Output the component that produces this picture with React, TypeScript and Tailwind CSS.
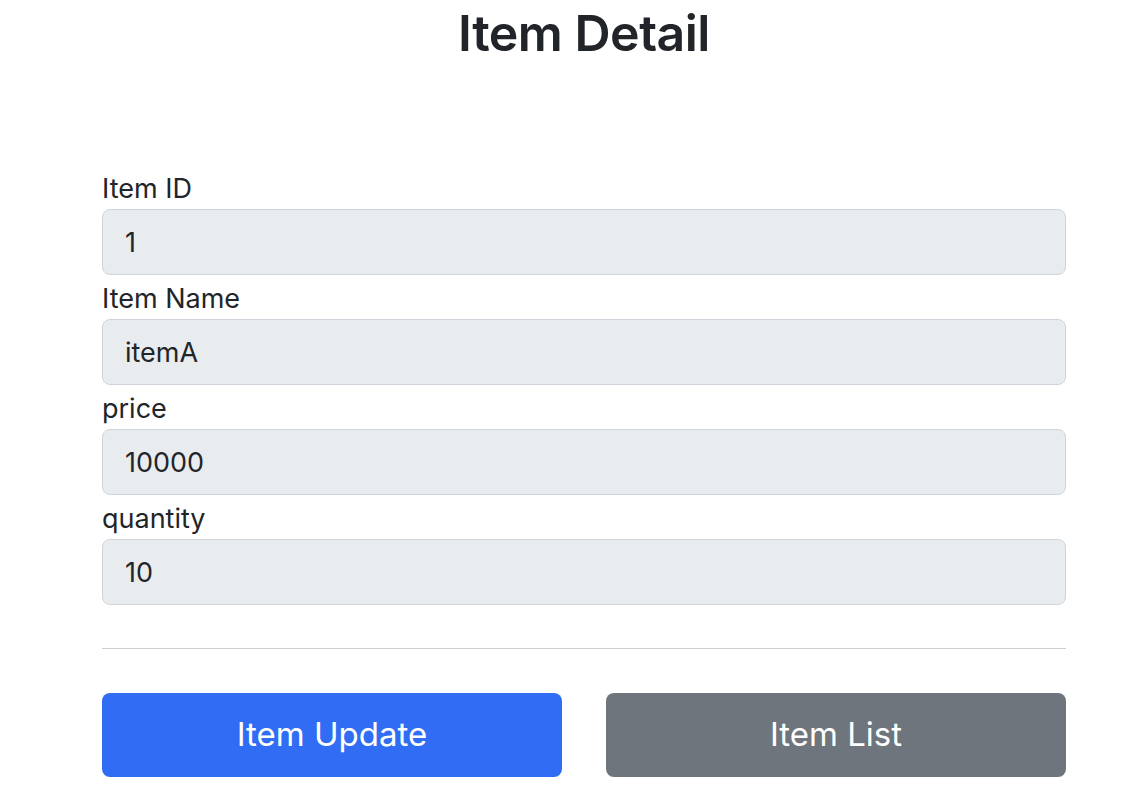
const fields = [
  { label: "Item ID", value: "1" },
  { label: "Item Name", value: "itemA" },
  { label: "price", value: "10000" },
  { label: "quantity", value: "10" },
];

export default function App() {
  return (
    <div className="min-h-screen bg-white font-['Inter','Noto_Sans',sans-serif] text-[#212529]">
      <div className="ml-[102px] w-[964px]">
        {/* Header */}
        <h2 className="pt-[2px] text-center text-[50px] font-semibold leading-[62px] tracking-[-0.5px]">
          Item Detail
        </h2>

        {/* Form */}
        <form className="mt-[107px] flex flex-col gap-[6px]">
          {fields.map((f) => (
            <div key={f.label} className="flex flex-col">
              <label className="mb-[2px] text-[27px] leading-[36px]">
                {f.label}
              </label>
              <input
                readOnly
                value={f.value}
                className="h-[66px] w-full rounded-[8px] border border-[#ced4da] bg-[#e9ecef] px-[22px] text-[27px] text-[#212529] outline-none"
              />
            </div>
          ))}
        </form>

        <hr className="mt-[43px] border-t border-[#cfcfcf]" />

        {/* Actions */}
        <div className="mt-[44px] grid grid-cols-2 gap-[44px]">
          <button
            type="button"
            className="h-[84px] rounded-[8px] bg-[#316df4] text-[33px] text-white"
          >
            Item Update
          </button>
          <button
            type="button"
            className="h-[84px] rounded-[8px] bg-[#6f757d] text-[33px] text-white"
          >
            Item List
          </button>
        </div>
      </div>
    </div>
  );
}
